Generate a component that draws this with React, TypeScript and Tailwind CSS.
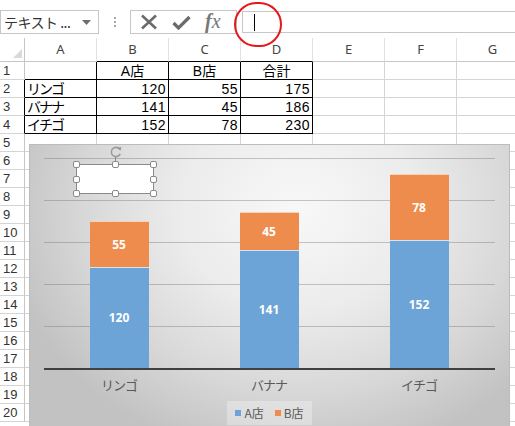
import React from "react";

const jp = "font-['Noto_Sans_CJK_JP',sans-serif]";
const cellFont = "font-['Liberation_Sans','Noto_Sans_CJK_JP',sans-serif]";

const colLetters = ["A", "B", "C", "D", "E", "F", "G"];

// sheet contents A1:D4
const sheet: (string | number)[][] = [
  ["", "A店", "B店", "合計"],
  ["リンゴ", 120, 55, 175],
  ["バナナ", 141, 45, 186],
  ["イチゴ", 152, 78, 230],
];

const series = [
  { name: "リンゴ", a: 120, b: 55 },
  { name: "バナナ", a: 141, b: 45 },
  { name: "イチゴ", a: 152, b: 78 },
];

const PX_PER_UNIT = 210 / 250;

const Handle = ({ className }: { className: string }) => (
  <div className={`absolute w-[7px] h-[7px] rounded-[2px] bg-white border border-[#8a8a8a] ${className}`} />
);

const FormulaBar = () => (
  <div className="h-[38px] pt-[10px] flex items-start">
    {/* name box */}
    <div className="w-[99px] h-[24px] border border-[#c6c6c6] flex items-center pl-[3px] pr-[7px]">
      <span className={`${jp} text-[14px] text-[#333] leading-none flex-1 tracking-[-0.5px]`}>テキスト&nbsp;...</span>
      <svg width="9" height="5" viewBox="0 0 9 5">
        <path d="M0 0h9L4.5 5z" fill="#6d6d6d" />
      </svg>
    </div>
    {/* grip */}
    <div className="w-[31px] h-[24px] flex flex-col items-center justify-center gap-[2px]">
      <div className="w-[2px] h-[2px] bg-[#a8a8a8]" />
      <div className="w-[2px] h-[2px] bg-[#a8a8a8]" />
      <div className="w-[2px] h-[2px] bg-[#a8a8a8]" />
    </div>
    {/* cancel / enter / fx */}
    <div className="w-[107px] h-[24px] border border-[#c6c6c6] flex items-center pl-[9px] gap-[14px]">
      <svg width="18" height="16" viewBox="0 0 18 16">
        <path d="M2 1.5l14 13M16 1.5l-14 13" stroke="#6b6b6b" strokeWidth="2.6" fill="none" />
      </svg>
      <svg width="19" height="15" viewBox="0 0 19 15">
        <path d="M1.5 8l5 5L17.5 2" stroke="#6b6b6b" strokeWidth="3.2" fill="none" strokeLinejoin="miter" />
      </svg>
      <span className="font-['Liberation_Serif',serif] italic text-[20px] leading-none text-[#777] -mt-[3px]">
        <span className="font-bold">f</span>x
      </span>
    </div>
    <div className="w-[5px]" />
    {/* formula input */}
    <div className="flex-1 h-[22px] mt-[1px] border border-[#c6c6c6] border-r-0 relative">
      <div className="absolute left-[11px] top-[2px] w-px h-[17px] bg-black" />
    </div>
  </div>
);

const cellBorder = (r: number, c: number) =>
  r <= 4 && c <= 3 ? "border-r border-b border-black" : "border-r border-b border-[#d4d4d4]";

const Sheet = () => (
  <div className="flex flex-col">
    {/* column header */}
    <div className="grid grid-cols-[25px_repeat(7,72px)] h-[24px]">
      <div className="border-r border-b border-[#c6c6c6] relative">
        <svg className="absolute right-[2px] bottom-[3px]" width="9" height="9" viewBox="0 0 9 9">
          <path d="M9 0v9H0z" fill="#dadada" />
        </svg>
      </div>
      {colLetters.map((l, i) => (
        <div
          key={l}
          className={`flex items-center justify-center text-[13px] text-[#444] font-['Noto_Sans',sans-serif] border-r border-[#e1e1e1] border-b ${
            i >= 1 && i <= 3 ? "border-b-black" : "border-b-[#c6c6c6]"
          }`}
        >
          {l}
        </div>
      ))}
    </div>
    {/* rows */}
    {Array.from({ length: 20 }, (_, idx) => {
      const r = idx + 1;
      const data = sheet[idx];
      return (
        <div key={r} className="grid grid-cols-[25px_repeat(7,72px)] h-[18px]">
          <div
            className={`pl-[3px] flex items-center text-[13px] leading-[16px] text-[#333] font-['Liberation_Sans',sans-serif] border-b border-[#d4d4d4] border-r ${
              r >= 2 && r <= 4 ? "border-r-black" : "border-r-[#c6c6c6]"
            }`}
          >
            {r}
          </div>
          {colLetters.map((l, c) => {
            const v = data && c <= 3 ? data[c] : "";
            const align =
              typeof v === "number"
                ? "justify-end pr-[2px] tracking-[0.5px]"
                : r === 1
                  ? "justify-center"
                  : "justify-start pl-[2px] tracking-[-2px]";
            return (
              <div
                key={l}
                className={`flex items-center overflow-hidden ${align} ${cellBorder(r, c)} ${cellFont} text-[14px] leading-[16px] text-black`}
              >
                {v}
              </div>
            );
          })}
        </div>
      );
    })}
  </div>
);

const Chart = () => (
  <div className="absolute left-[29px] top-[144px] w-[481px] h-[290px] border border-[#bcbcbc] bg-[radial-gradient(ellipse_62%_88%_at_56%_22%,#f8f8f8_0%,#ececec_40%,#d8d8d8_72%,#c2c2c2_100%)]">
    {/* plot area */}
    <div className="ml-[14px] mt-[13px] w-[451px] h-[212px] border-b-2 border-[#404040] flex items-end bg-[repeating-linear-gradient(to_bottom,rgba(110,110,110,0.38)_0px,rgba(110,110,110,0.38)_1px,transparent_1px,transparent_42px)]">
      {series.map((s) => (
        <div key={s.name} className="w-[150px] flex justify-center">
          <div className="w-[59px] flex flex-col">
            <div
              className="bg-[#ee8c4d] border-t border-white/60 flex items-center justify-center text-white font-bold text-[12px] font-['Noto_Sans',sans-serif]"
              style={{ height: Math.round(s.b * PX_PER_UNIT) }}
            >
              {s.b}
            </div>
            <div
              className="bg-[#6ca4d7] border-t border-white/70 flex items-center justify-center text-white font-bold text-[12px] font-['Noto_Sans',sans-serif]"
              style={{ height: Math.round(s.a * PX_PER_UNIT) }}
            >
              {s.a}
            </div>
          </div>
        </div>
      ))}
    </div>
    {/* category axis */}
    <div className="ml-[14px] w-[451px] flex mt-[6px]">
      {series.map((s) => (
        <div key={s.name} className={`w-[150px] text-center text-[13px] leading-[18px] tracking-[-1px] text-[#595959] ${jp}`}>
          {s.name}
        </div>
      ))}
    </div>
    {/* legend */}
    <div className="ml-[14px] w-[451px] flex justify-center mt-[7px]">
      <div className={`flex items-center gap-[3px] px-[8px] h-[24px] bg-white/30 text-[12px] text-[#595959] ${jp}`}>
        <div className="w-[6px] h-[6px] bg-[#6ca4d7]" />
        <span className="mr-[8px]">A店</span>
        <div className="w-[6px] h-[6px] bg-[#ee8c4d]" />
        <span>B店</span>
      </div>
    </div>

    {/* selected empty text box */}
    <div className="absolute left-[46px] top-[19px] w-[78px] h-[30px] bg-white border border-[#8a8a8a]">
      <Handle className="-left-[4px] -top-[4px]" />
      <Handle className="left-[35px] -top-[4px]" />
      <Handle className="-right-[4px] -top-[4px]" />
      <Handle className="-left-[4px] top-[11px]" />
      <Handle className="-right-[4px] top-[11px]" />
      <Handle className="-left-[4px] -bottom-[4px]" />
      <Handle className="left-[35px] -bottom-[4px]" />
      <Handle className="-right-[4px] -bottom-[4px]" />
      <div className="absolute left-[38px] -top-[8px] w-px h-[5px] bg-[#8a8a8a]" />
      <svg className="absolute left-[32px] -top-[20px]" width="14" height="13" viewBox="0 0 14 13">
        <circle cx="7" cy="7" r="4.6" stroke="#9a9a9a" strokeWidth="1.6" fill="none" strokeDasharray="24 5" strokeDashoffset="-2" />
        <path d="M8.5 2.6l3.8-0.6-0.6 3.8z" fill="#9a9a9a" />
      </svg>
    </div>
  </div>
);

export default function App() {
  return (
    <div className="w-[515px] h-[426px] overflow-hidden bg-white relative">
      <FormulaBar />
      <Sheet />
      <Chart />
      {/* red annotation circle */}
      <div className="absolute left-[234px] top-[2px] w-[48px] h-[45px] rounded-full border-2 border-[#e5191b]" />
    </div>
  );
}
